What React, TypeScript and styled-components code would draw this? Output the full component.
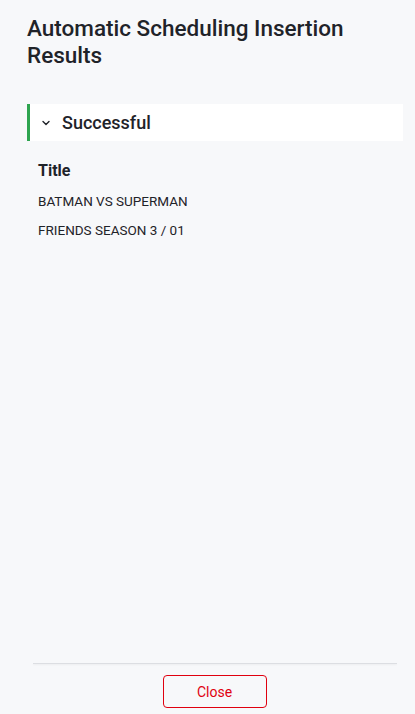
import React from "react";
import styled, { createGlobalStyle } from "styled-components";

const Global = createGlobalStyle`
  html, body { margin: 0; padding: 0; background: #f7f8fa; }
  body { font-family: Roboto, "Liberation Sans", Arial, sans-serif; color: #1f2329; }
`;

const Page = styled.div`
  height: 714px;
  display: flex;
  flex-direction: column;
  background: #f7f8fa;
  box-sizing: border-box;
`;

const Header = styled.h1`
  margin: 0;
  padding: 15px 60px 0 27px;
  font-size: 22.5px;
  line-height: 27px;
  font-weight: 500;
  color: #1f2329;
`;

const Body = styled.div`
  flex: 1;
  padding: 35px 12px 0 27px;
`;

const Section = styled.div`
  display: flex;
  align-items: center;
  gap: 11px;
  height: 37px;
  background: #ffffff;
  border-left: 3px solid #2ea44f;
  padding-left: 11px;
`;

const SectionLabel = styled.span`
  font-size: 18px;
  font-weight: 500;
  color: #1f2329;
`;

const Table = styled.div`
  padding: 20px 0 0 11px;
  display: flex;
  flex-direction: column;
`;

const HeadCell = styled.div`
  font-size: 16px;
  font-weight: 700;
  line-height: 20px;
  margin-bottom: 6px;
`;

const Cell = styled.div`
  font-size: 13.5px;
  line-height: 29px;
  color: #1f2329;
`;

const Footer = styled.div`
  display: flex;
  flex-direction: column;
  align-items: center;
  padding: 0 18px 6px 33px;
`;

const Divider = styled.div`
  align-self: stretch;
  height: 1px;
  background: #dcdee2;
  box-shadow: 0 1px 2px rgba(0, 0, 0, 0.06);
  margin-bottom: 11px;
`;

const CloseButton = styled.button`
  width: 104px;
  height: 33px;
  background: transparent;
  border: 1px solid #e0000f;
  border-radius: 4px;
  color: #e0000f;
  font-family: Roboto, "Liberation Sans", Arial, sans-serif;
  font-size: 14px;
  cursor: pointer;
  margin-left: -1px;
`;

const Chevron = () => (
  <svg width="10" height="10" viewBox="0 0 10 10" fill="none">
    <path d="M2 3.5 L5 6.5 L8 3.5" stroke="#1f2329" strokeWidth="1.4" strokeLinecap="round" strokeLinejoin="round" />
  </svg>
);

export default function App() {
  return (
    <>
      <Global />
      <Page>
        <Header>Automatic Scheduling Insertion Results</Header>
        <Body>
          <Section>
            <Chevron />
            <SectionLabel>Successful</SectionLabel>
          </Section>
          <Table>
            <HeadCell>Title</HeadCell>
            <Cell>BATMAN VS SUPERMAN</Cell>
            <Cell>FRIENDS SEASON 3 / 01</Cell>
          </Table>
        </Body>
        <Footer>
          <Divider />
          <CloseButton>Close</CloseButton>
        </Footer>
      </Page>
    </>
  );
}
